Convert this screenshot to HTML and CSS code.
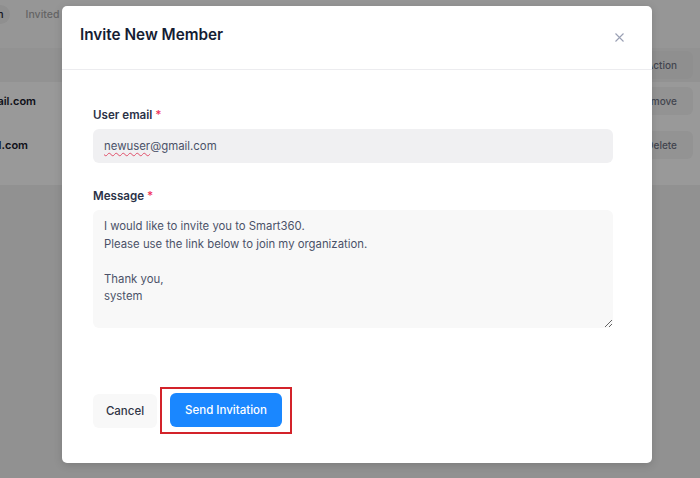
FILE: index.html
```html
<!DOCTYPE html>
<html>
<head>
<meta charset="utf-8">
<link rel="stylesheet" href="styles.css">
</head>
<body>
<div class="page">
  <div class="tabs">
    <span class="tab active">Team</span>
    <span class="tab">Invited</span>
  </div>
  <div class="table">
    <div class="row head">
      <span class="cell"></span>
      <span class="btn-bg">Action</span>
    </div>
    <div class="row r1">
      <span class="cell"><span class="email">user@gmail.com</span></span>
      <span class="btn-bg">Remove</span>
    </div>
    <div class="row r2">
      <span class="cell"><span class="email">admin@gmail.com</span></span>
      <span class="btn-bg">Delete</span>
    </div>
  </div>
</div>

<div class="overlay">
  <div class="modal">
    <div class="modal-header">
      <h2 class="modal-title">Invite New Member</h2>
      <button class="close" aria-label="Close">
        <svg width="9" height="9" viewBox="0 0 9 9"><path d="M0.5 0.5L8.5 8.5M8.5 0.5L0.5 8.5" stroke="#9aa0b4" stroke-width="1.1" fill="none"/></svg>
      </button>
    </div>
    <div class="modal-body">
      <label class="label">User email <span class="req">*</span></label>
      <div class="input"><span class="misspelled">newuser</span>@gmail.com</div>
      <label class="label second">Message <span class="req">*</span></label>
      <textarea class="textarea" readonly>I would like to invite you to Smart360.
Please use the link below to join my organization.

Thank you,
system</textarea>
    </div>
    <div class="modal-footer">
      <button class="btn cancel">Cancel</button>
      <span class="highlight"><button class="btn primary">Send Invitation</button></span>
    </div>
  </div>
</div>
</body>
</html>
```
FILE: styles.css
```css
* { box-sizing: border-box; }
html, body { margin: 0; padding: 0; }
body {
  width: 700px;
  height: 478px;
  overflow: hidden;
  background: #f2f2f2;
  font-family: Inter, "Noto Sans", sans-serif;
  position: relative;
}
.page {
  display: flex;
  flex-direction: column;
}
.tabs {
  display: flex;
  align-items: center;
  gap: 16px;
  height: 48px;
  background: #fbfbfb;
  padding-bottom: 20px;
}
.tab {
  font-size: 10.5px;
  font-weight: 500;
  color: #a8a8a8;
}
.tab.active {
  color: #1c2333;
  background: #eeeeee;
  border-radius: 10px;
  padding: 3px 6px 3px 6px;
  margin-left: -30px;
}
.table {
  background: #fff;
  display: flex;
  flex-direction: column;
}
.row {
  display: flex;
  justify-content: space-between;
  align-items: center;
  padding-right: 7px;
}
.row.head {
  height: 34px;
  background: #f4f4f4;
}
.row.r1 { height: 37px; }
.row.r2 { height: 66px; padding-bottom: 14px; }
.cell {
  width: 36px;
  display: flex;
  justify-content: flex-end;
  white-space: nowrap;
}
.r2 .cell { width: 28px; }
.email {
  font-size: 11px;
  font-weight: 600;
  color: #18202e;
}
.btn-bg {
  font-size: 10px;
  font-weight: 500;
  color: #6f7484;
  background: #f5f5f5;
  border-radius: 6px;
  padding: 8px 16px 8px 12px;
}
.row.head .btn-bg { background: #efefef; }

.overlay {
  position: absolute;
  inset: 0;
  background: rgba(0, 0, 0, 0.4);
  padding: 6px 48px 0 62px;
}
.modal {
  width: 590px;
  height: 457px;
  background: #fff;
  border-radius: 5px;
  display: flex;
  flex-direction: column;
  box-shadow: 0 2px 8px rgba(0,0,0,0.15);
}
.modal-header {
  height: 64px;
  border-bottom: 1px solid #ececef;
  display: flex;
  align-items: center;
  justify-content: space-between;
  padding: 0 28px 0 18px;
}
.modal-title {
  margin: 0;
  font-size: 15.3px;
  font-weight: 600;
  color: #151d33;
  position: relative;
  top: -3px;
}
.close {
  border: 0;
  background: none;
  padding: 0;
  width: 9px;
  height: 9px;
  display: flex;
  margin-top: 0;
}
.modal-body {
  padding: 38px 39px 0 31px;
  display: flex;
  flex-direction: column;
}
.label {
  font-size: 11.6px;
  font-weight: 600;
  color: #2b3247;
  line-height: 15px;
  margin-bottom: 6px;
}
.label.second { margin-top: 26px; }
.req { color: #f0355b; }
.input {
  height: 34px;
  background: #f0f0f2;
  border-radius: 6px;
  font-size: 11.4px;
  color: #4b5268;
  padding: 0 11px;
  display: flex;
  align-items: center;
}
.misspelled {
  text-decoration: underline wavy #e0506a;
  text-decoration-thickness: 1px;
  text-underline-offset: 2px;
}
.textarea {
  height: 118px;
  width: 100%;
  background: #f8f8f8;
  border: 0;
  border-radius: 6px;
  font-family: Inter, "Noto Sans", sans-serif;
  font-size: 11.35px;
  line-height: 17.5px;
  color: #4b5268;
  padding: 8px 11px;
  resize: vertical;
  outline: none;
  overflow: hidden;
}
.modal-footer {
  margin-top: auto;
  padding: 0 0 29px 31px;
  display: flex;
  align-items: center;
  gap: 3px;
}
.btn {
  height: 34px;
  border: 0;
  border-radius: 6px;
  font-family: Inter, "Noto Sans", sans-serif;
  font-size: 11.5px;
  font-weight: 500;
  cursor: pointer;
}
.cancel {
  width: 64px;
  background: #f8f8f8;
  color: #2f3545;
}
.highlight {
  display: inline-flex;
  border: 2px solid #d3232a;
  padding: 4px 8px 5px 8px;
}
.primary {
  width: 112px;
  background: #1a87ff;
  color: #fff;
}
```
